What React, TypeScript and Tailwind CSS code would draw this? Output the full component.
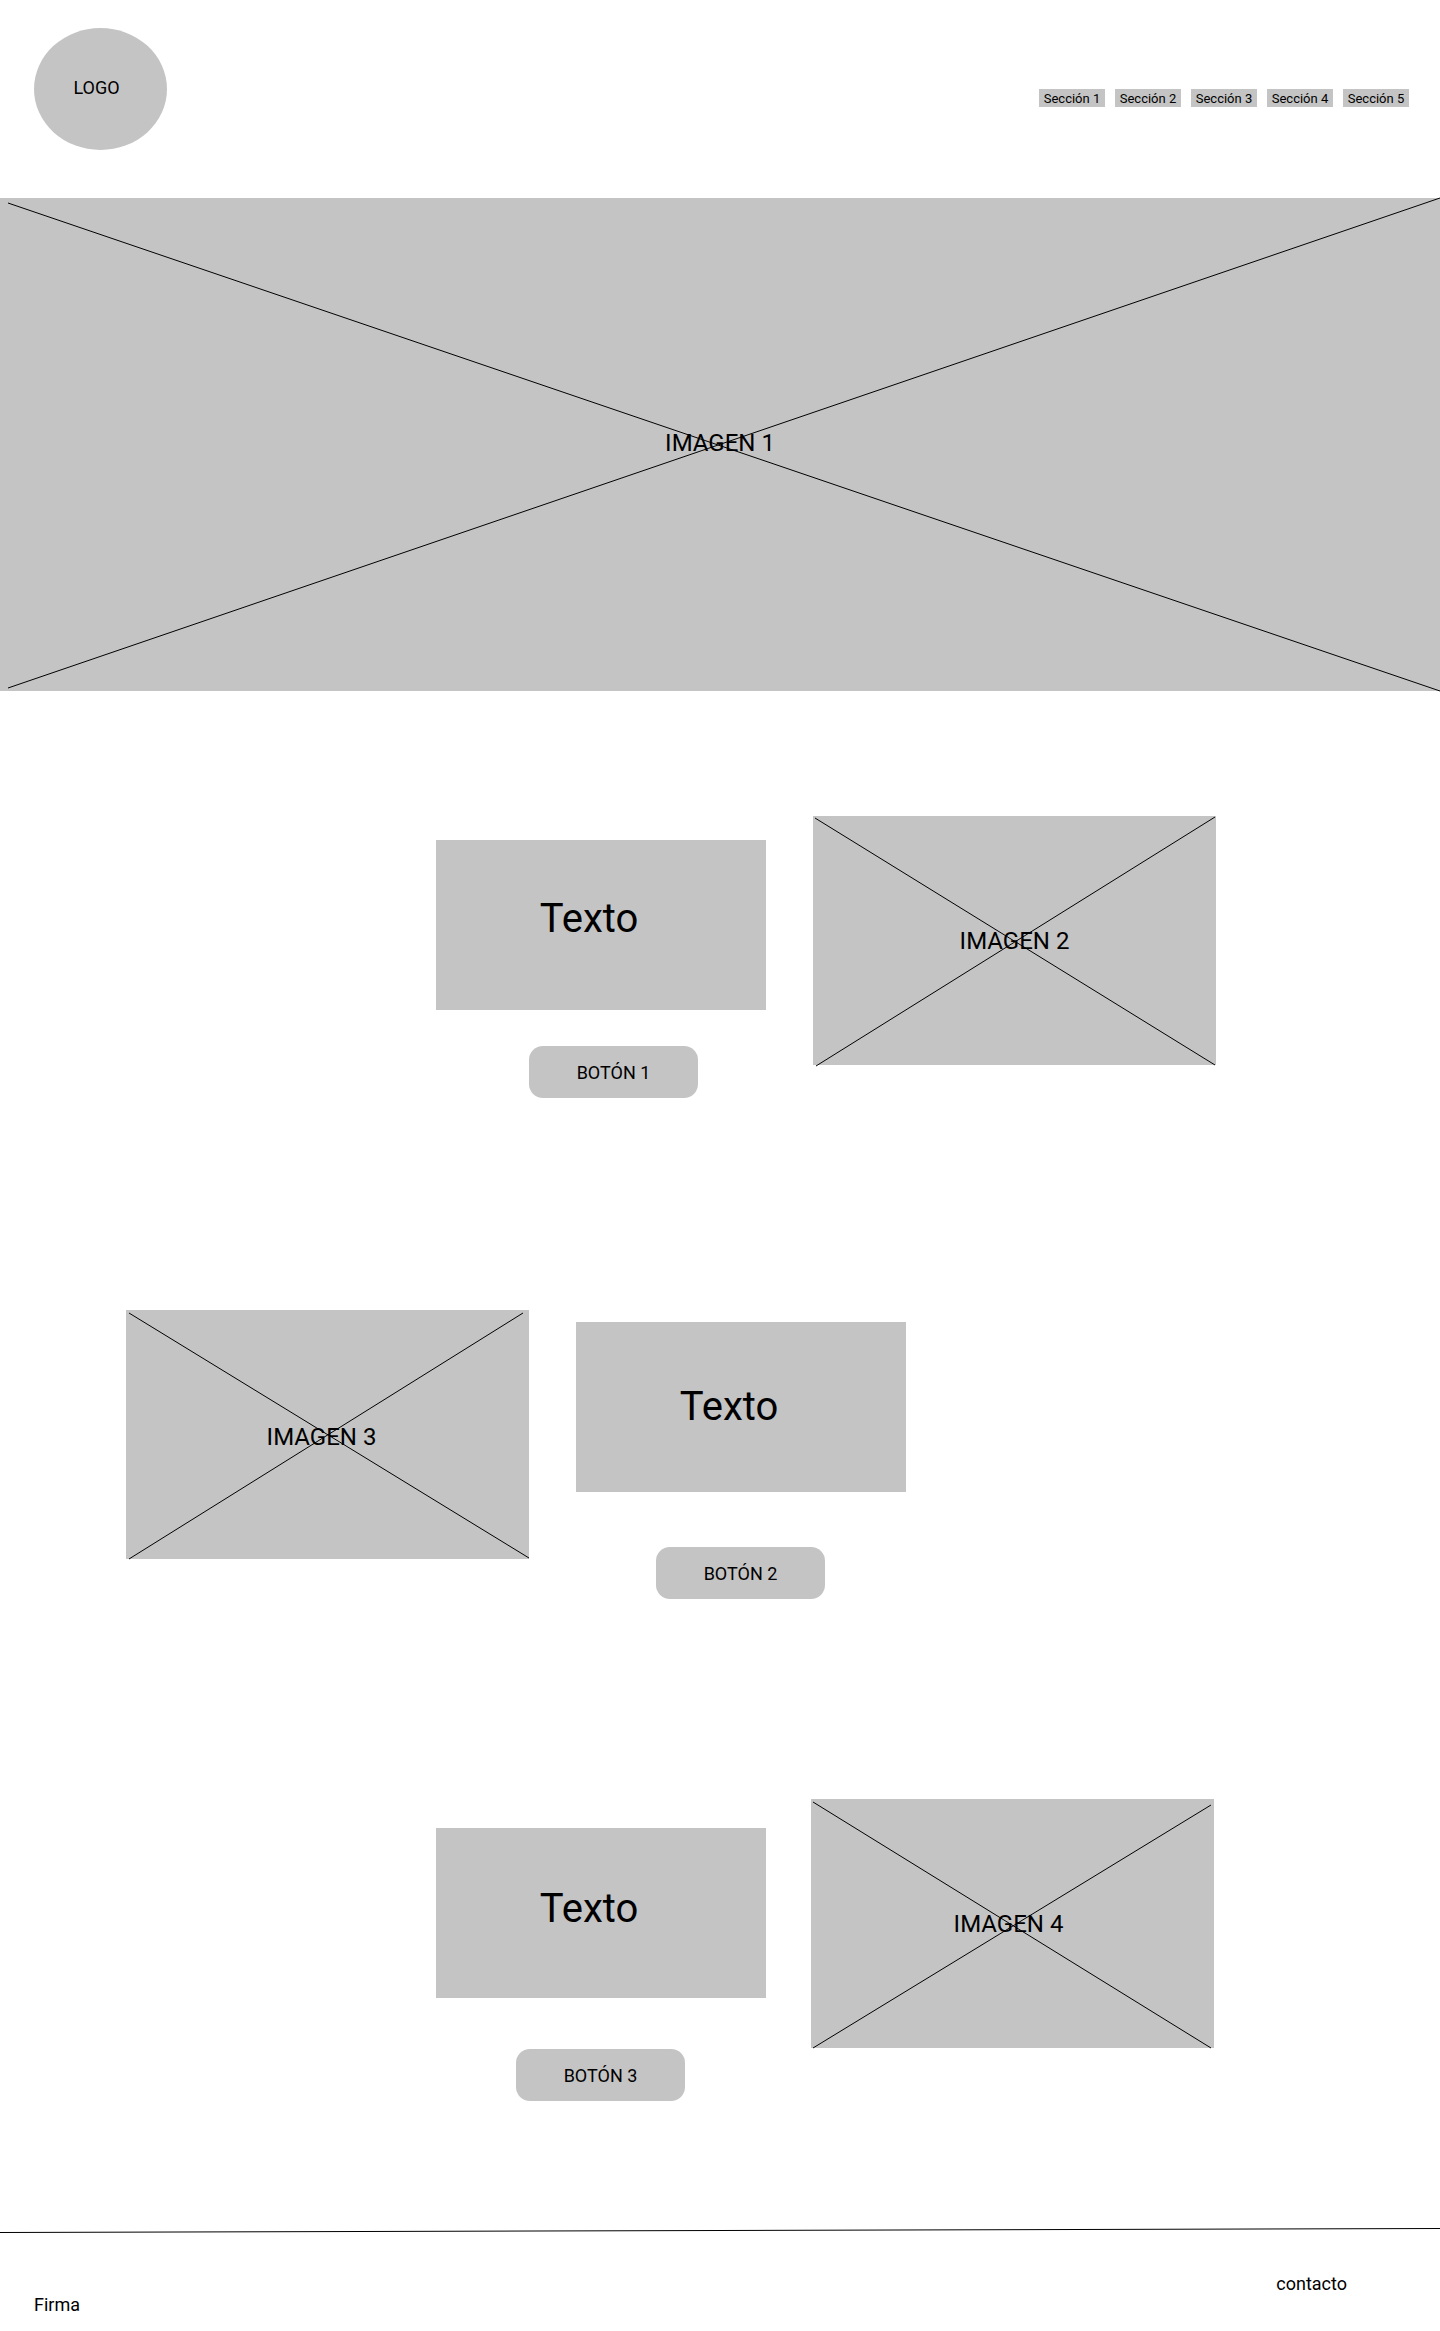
type Line = [number, number, number, number];

type CrossedImageProps = {
  label: string;
  width: number;
  height: number;
  lines: Line[];
  className: string;
};

// Gray image placeholder with two diagonals and a caption on top.
function CrossedImage({ label, width, height, lines, className }: CrossedImageProps) {
  return (
    <figure className={`relative flex items-center justify-center bg-[#c4c4c4] ${className}`}>
      <svg
        className="absolute inset-0 h-full w-full overflow-visible"
        viewBox={`0 0 ${width} ${height}`}
        preserveAspectRatio="none"
        aria-hidden="true"
      >
        {lines.map(([x1, y1, x2, y2], i) => (
          <line
            key={i}
            x1={x1}
            y1={y1}
            x2={x2}
            y2={y2}
            stroke="#000"
            strokeWidth="1"
            vectorEffect="non-scaling-stroke"
          />
        ))}
      </svg>
      <figcaption className="relative text-2xl leading-7">{label}</figcaption>
    </figure>
  );
}

type TextBlockProps = {
  button: string;
  className: string;
  boxClassName: string;
  buttonClassName: string;
};

function TextBlock({ button, className, boxClassName, buttonClassName }: TextBlockProps) {
  return (
    <div className={`flex w-full max-w-[330px] flex-col items-start ${className}`}>
      <div className={`flex h-[170px] w-full items-center justify-center bg-[#c4c4c4] ${boxClassName}`}>
        <h2 className="text-[40px] leading-[48px]">Texto</h2>
      </div>
      <button
        type="button"
        className={`h-[52px] w-[169px] cursor-pointer rounded-[14px] bg-[#c4c4c4] text-lg leading-[21px] ${buttonClassName}`}
      >
        {button}
      </button>
    </div>
  );
}

const sections = ["Sección 1", "Sección 2", "Sección 3", "Sección 4", "Sección 5"];

export default function App() {
  return (
    <div className="w-full overflow-x-hidden bg-white font-[Roboto,sans-serif] text-black">
      <header className="flex flex-wrap items-start justify-between pt-7 pr-[31px] pb-12 pl-[34px]">
        <a
          href="#inicio"
          className="flex h-[122px] w-[133px] items-center justify-center rounded-[50%] bg-[#c4c4c4] pr-2 pb-1 text-lg leading-[21px]"
        >
          LOGO
        </a>
        <nav className="mt-[61px] flex flex-wrap gap-2.5" aria-label="Secciones">
          {sections.map((name, i) => (
            <a
              key={name}
              href={`#seccion-${i + 1}`}
              className="flex h-[18px] w-[66px] items-center justify-center bg-[#c4c4c4] text-[13px] leading-[15px] whitespace-nowrap"
            >
              {name}
            </a>
          ))}
        </nav>
      </header>

      <main>
        <CrossedImage
          label="IMAGEN 1"
          width={1440}
          height={493}
          lines={[
            [8, 5, 1440, 493],
            [8, 490, 1440, 0],
          ]}
          className="h-[493px] w-full pb-1"
        />

        <section className="flex flex-col items-center gap-[47px] px-6 pt-[125px] lg:flex-row lg:items-start lg:justify-end lg:pr-56">
          <TextBlock
            button="BOTÓN 1"
            className="lg:pt-6"
            boxClassName="pr-6 pb-3"
            buttonClassName="mt-9 ml-[93px]"
          />
          <CrossedImage
            label="IMAGEN 2"
            width={403}
            height={249}
            lines={[
              [2, 2, 402, 249],
              [3, 250, 402, 1],
            ]}
            className="h-[249px] w-full max-w-[403px]"
          />
        </section>

        <section className="flex flex-col items-center gap-[47px] px-6 pt-[212px] lg:flex-row lg:items-start lg:pl-[126px]">
          <CrossedImage
            label="IMAGEN 3"
            width={403}
            height={249}
            lines={[
              [3, 3, 403, 248],
              [3, 249, 397, 3],
            ]}
            className="h-[249px] w-full max-w-[403px] pt-1 pr-3"
          />
          <TextBlock
            button="BOTÓN 2"
            className="lg:pt-3"
            boxClassName="pr-6"
            buttonClassName="mt-[55px] ml-20"
          />
        </section>

        <section className="flex flex-col items-center gap-[45px] px-6 pt-[200px] lg:flex-row lg:items-start lg:justify-end lg:pr-[226px]">
          <TextBlock
            button="BOTÓN 3"
            className="lg:pt-[29px]"
            boxClassName="pr-6 pb-2"
            buttonClassName="mt-[51px] ml-20"
          />
          <CrossedImage
            label="IMAGEN 4"
            width={403}
            height={249}
            lines={[
              [2, 3, 400, 249],
              [2, 249, 400, 6],
            ]}
            className="h-[249px] w-full max-w-[403px] pr-2"
          />
        </section>
      </main>

      <footer className="pt-[127px] text-lg leading-[21px]">
        <svg
          className="block h-[5px] w-full"
          viewBox="0 0 1440 5"
          preserveAspectRatio="none"
          aria-hidden="true"
        >
          <line x1="0" y1="4.5" x2="1440" y2="0.5" stroke="#000" strokeWidth="1" vectorEffect="non-scaling-stroke" />
        </svg>
        <div className="flex h-[98px] justify-between pt-10 pr-[93px] pb-4 pl-[34px]">
          <p className="self-end">Firma</p>
          <a href="#contacto" className="self-start">
            contacto
          </a>
        </div>
      </footer>
    </div>
  );
}
